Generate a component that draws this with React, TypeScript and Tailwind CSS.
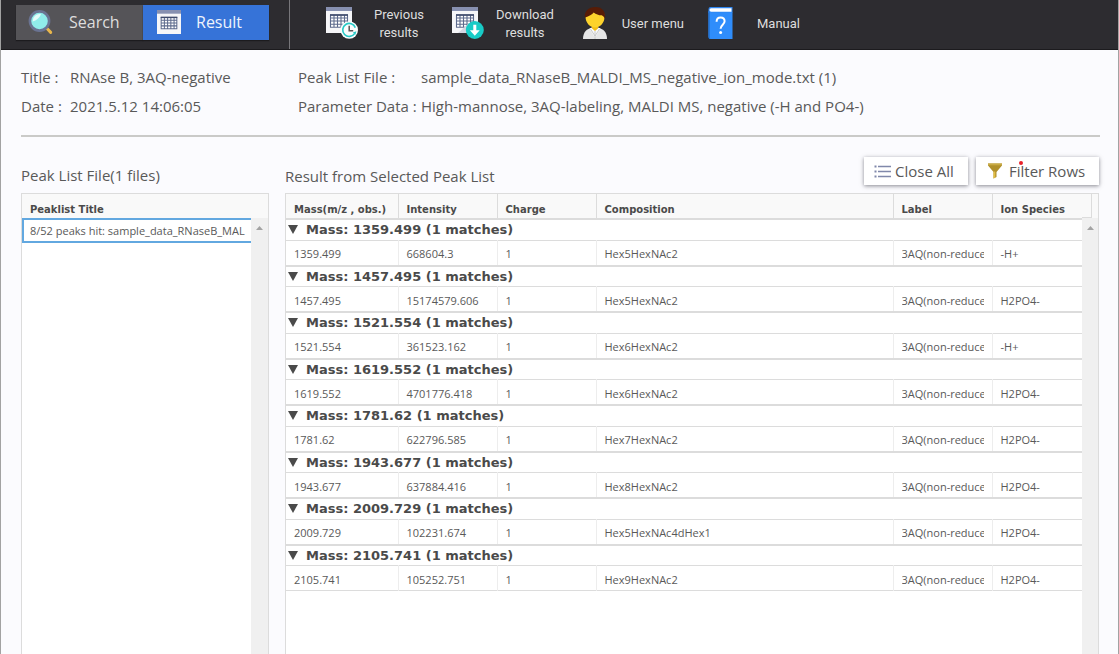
import React from 'react';

type Peak = {
  mass: string;
  intensity: string;
  charge: string;
  composition: string;
  ion: string;
};

const LABEL = '3AQ(non-reduced)';

const PEAKS: Peak[] = [
  { mass: '1359.499', intensity: '668604.3', charge: '1', composition: 'Hex5HexNAc2', ion: '-H+' },
  { mass: '1457.495', intensity: '15174579.606', charge: '1', composition: 'Hex5HexNAc2', ion: 'H2PO4-' },
  { mass: '1521.554', intensity: '361523.162', charge: '1', composition: 'Hex6HexNAc2', ion: '-H+' },
  { mass: '1619.552', intensity: '4701776.418', charge: '1', composition: 'Hex6HexNAc2', ion: 'H2PO4-' },
  { mass: '1781.62', intensity: '622796.585', charge: '1', composition: 'Hex7HexNAc2', ion: 'H2PO4-' },
  { mass: '1943.677', intensity: '637884.416', charge: '1', composition: 'Hex8HexNAc2', ion: 'H2PO4-' },
  { mass: '2009.729', intensity: '102231.674', charge: '1', composition: 'Hex5HexNAc4dHex1', ion: 'H2PO4-' },
  { mass: '2105.741', intensity: '105252.751', charge: '1', composition: 'Hex9HexNAc2', ion: 'H2PO4-' },
];

function MagnifierIcon() {
  return (
    <svg width="26" height="26" viewBox="0 0 26 26" aria-hidden="true">
      <path d="M17.5 18l2.5 2.5" stroke="#6c7a9c" strokeWidth="2" />
      <path d="M19.3 19.8l3.4 3.6" stroke="#e8b64c" strokeWidth="3" strokeLinecap="round" />
      <circle cx="11.5" cy="12" r="9.6" fill="#90ecea" stroke="#6a7392" strokeWidth="2.6" />
      <path d="M4.6 12.5A7 7 0 0 1 13 5.2C11.6 8.6 8.6 11.4 4.6 12.5z" fill="#e4fbfa" />
    </svg>
  );
}

function SheetShape() {
  return (
    <>
      <rect x="0" y="0" width="26" height="26" fill="#f6f6f8" />
      <rect x="0" y="0" width="26" height="4" fill="#8790b0" />
      <rect x="4" y="7.5" width="18" height="13" fill="#fff" />
      <path
        d="M4.5 8v12.5M8 8v12.5M11.5 8v12.5M15 8v12.5M18.5 8v12.5M21.5 8v12.5M4 8h18M4 11h18M4 14h18M4 17.2h18M4 20.3h18"
        stroke="#5d6a8c"
        strokeWidth="1.1"
      />
      <path d="M4 8h18" stroke="#3f4a6b" strokeWidth="1.6" />
    </>
  );
}

function SheetIcon() {
  return (
    <svg width="24" height="24" viewBox="0 0 26 26" aria-hidden="true">
      <SheetShape />
    </svg>
  );
}

function HistoryIcon() {
  return (
    <svg width="32" height="33" viewBox="0 0 32 33" aria-hidden="true">
      <SheetShape />
      <path d="M17 16v10h9z" fill="#d4d6e2" />
      <circle cx="23.2" cy="23" r="8.8" fill="#fbfdfd" />
      <path d="M29.3 20.6A6.5 6.5 0 1 0 28.6 26.6" fill="none" stroke="#25c9c6" strokeWidth="1.6" />
      <path d="M30.4 24.2l-3.6 1.2 2.6 2.4z" fill="#25c9c6" />
      <path d="M23.2 18.8v4.9h4" fill="none" stroke="#565656" strokeWidth="1.5" />
    </svg>
  );
}

function DownloadIcon() {
  return (
    <svg width="32" height="33" viewBox="0 0 32 33" aria-hidden="true">
      <SheetShape />
      <path d="M6 26l10-9v9z" fill="#d4d6e2" />
      <circle cx="22.8" cy="23" r="9" fill="#18cbc6" />
      <path d="M21.3 17.8h3v5.4h3.4l-4.9 5.5-4.9-5.5h3.4z" fill="#fff" />
    </svg>
  );
}

function UserIcon() {
  return (
    <svg width="26" height="33" viewBox="0 0 26 33" aria-hidden="true">
      <path d="M1 32c0-7 4-10.6 9-11h6c5 .4 9 4 9 11z" fill="#e6e6e6" />
      <path d="M7.6 21.4L13 31l5.4-9.6L13 19z" fill="#fafafa" />
      <path d="M13 24v8M8.5 22l4.5 7 4.5-7" fill="none" stroke="#c4c4c4" strokeWidth="0.9" />
      <path d="M10 17h6v4.5l-3 2.5-3-2.5z" fill="#f2bd16" />
      <path d="M3.5 9.500C3.500 4 8 2.500 13 2.500S22.600 4 22.600 9.500c0 6.500-4.600 11-9.600 11S3.500 16 3.500 9.500z" fill="#fdd32c" />
      <path d="M3 10.500C1.800 4.800 6.500 0 13.500 0S24 4.800 22.900 12c-.6-1.600-1.500-2.900-3.200-3.700-3 0-5.800-.9-8-2.800C10.200 7.600 7 9.300 3 10.500z" fill="#571c06" />
    </svg>
  );
}

function ManualIcon() {
  return (
    <svg width="25" height="33" viewBox="0 0 25 33" aria-hidden="true">
      <path d="M2.5 0H24.5v6H.5V2A2 2 0 0 1 2.5 0z" fill="#2f86f0" />
      <path d="M3.2 1.3H23.5v3.5H3.2a1.75 1.75 0 0 1 0-3.5z" fill="#fff" />
      <path d="M.5 3.5C1 5 2 5.4 3.5 5.4H24.5V32H2.5A2 2 0 0 1 .5 30z" fill="#2f8dfb" />
      <path d="M.5 4v26a2 2 0 0 0 1.5 2V5.3z" fill="#2477da" />
      <path d="M8.6 14.7c0-2.7 1.8-4.2 4-4.2s4 1.4 4 3.8c0 3.3-4 3.6-4 7.4" fill="none" stroke="#fff" strokeWidth="2" />
      <circle cx="12.6" cy="25.4" r="1.5" fill="#fff" />
    </svg>
  );
}

function ListIcon() {
  return (
    <svg width="17" height="13" viewBox="0 0 17 13" aria-hidden="true">
      <path d="M4 1.5h13M4 6.5h13M4 11.5h13" stroke="#8088aa" strokeWidth="1.7" />
      <path d="M0.5 1.5h2M0.5 6.5h2M0.5 11.5h2" stroke="#8088aa" strokeWidth="2" />
    </svg>
  );
}

function FunnelIcon() {
  return (
    <svg width="14" height="16" viewBox="0 0 14 16" aria-hidden="true">
      <path d="M0 .5h14v2L8.500 9v5L5.500 15.500V9L0 2.500z" fill="#b0902c" />
      <path d="M0 .5h14v1.800H0z" fill="#c9ab45" />
      <path d="M5.500 8.500h1.800v6L5.500 15.500z" fill="#e2bd45" />
    </svg>
  );
}

function ScrollTrack() {
  return (
    <div className="flex flex-1 justify-center bg-[#f0f0f0] pt-2">
      <svg width="7" height="4" viewBox="0 0 7 4" aria-hidden="true">
        <path d="M3.5 0L7 4H0z" fill="#a3a3a3" />
      </svg>
    </div>
  );
}

function Info({ label, value, labelClass }: { label: string; value: string; labelClass: string }) {
  return (
    <div className="flex whitespace-nowrap">
      <dt className={labelClass}>{label}</dt>
      <dd>{value}</dd>
    </div>
  );
}

const TH = "border-r border-[#dcdcdc] px-2 pt-2 text-left font-['DejaVu_Sans',sans-serif] text-[10px] leading-4 font-bold whitespace-nowrap text-[#4a4a4a]";
const TD = 'overflow-hidden px-2 pt-[3px] leading-5 whitespace-nowrap';

export default function App() {
  return (
    <div className="flex h-screen flex-col overflow-hidden border-x border-[#a2a2a2] bg-[#fbfbfe] font-['Open_Sans',sans-serif] text-[15px] leading-5 text-[#595959]">
      <header className="flex h-[50px] shrink-0 border-b border-[#1c1b1e] bg-[#2d2c30] text-[#dedede]">
        <nav className="flex w-[289px] shrink-0 items-start border-r border-[#77767a] pt-[5px] pl-[15px] text-base">
          <a href="#search" className="flex h-[35px] w-[127px] items-center gap-[15px] bg-[#555458] pb-0.5 pl-3 shadow-[0_1px_1px_#1c1b1e]">
            <MagnifierIcon />
            Search
          </a>
          <a href="#result" className="flex h-[35px] w-[126px] items-center gap-[15px] bg-[#3673d8] pb-0.5 pl-[14px] text-[#eef3fc] shadow-[0_1px_1px_#1c1b1e]">
            <SheetIcon />
            Result
          </a>
        </nav>
        <div className="flex h-[47px] items-center gap-6 pl-9 text-center font-['Roboto',sans-serif] text-[13px] leading-[18px]">
          <button type="button" className="flex w-[102px] items-center">
            <HistoryIcon />
            <span className="flex-1 pl-3">Previous results</span>
          </button>
          <button type="button" className="flex w-[106px] items-center">
            <DownloadIcon />
            <span className="flex-1 pl-2">Download results</span>
          </button>
          <button type="button" className="flex w-[102px] items-center justify-between">
            <UserIcon />
            User menu
          </button>
          <button type="button" className="flex w-[92px] items-center justify-between">
            <ManualIcon />
            Manual
          </button>
        </div>
      </header>

      <dl className="mr-[18px] ml-5 flex shrink-0 gap-2 border-b-2 border-[#cacac8] pt-[17px] pb-[19px]">
        <div className="flex w-[269px] flex-col gap-[9px]">
          <Info label="Title :" value="RNAse B, 3AQ-negative" labelClass="w-[49px]" />
          <Info label="Date :" value="2021.5.12 14:06:05" labelClass="w-[49px]" />
        </div>
        <div className="flex flex-col gap-[9px]">
          <Info label="Peak List File :" value="sample_data_RNaseB_MALDI_MS_negative_ion_mode.txt (1)" labelClass="w-[123px]" />
          <Info label="Parameter Data :" value="High-mannose, 3AQ-labeling, MALDI MS, negative (-H and PO4-)" labelClass="w-[123px]" />
        </div>
      </dl>

      <main className="flex min-h-0 flex-1 gap-4 pt-5 pr-[19px] pl-5">
        <section className="flex w-[248px] shrink-0 flex-col">
          <h2 className="flex h-9 items-center">Peak List File(1 files)</h2>
          <div className="flex flex-1 flex-col border-x border-t border-[#dcdcdc] bg-white">
            <div className="h-6 bg-[#f9f9f9] px-2 pt-2 font-['DejaVu_Sans',sans-serif] text-[10px] leading-4 font-bold text-[#4a4a4a]">
              Peaklist Title
            </div>
            <div className="flex flex-1">
              <ul className="min-w-0 flex-1 text-[11px]">
                <li className="flex h-[25px]">
                  <button type="button" className="flex-1 overflow-hidden border-y-2 border-l-2 border-[#62a8e0] pt-px pl-[6px] text-left whitespace-nowrap">
                    8/52 peaks hit: sample_data_RNaseB_MAL
                  </button>
                </li>
              </ul>
              <div className="flex w-[17px]">
                <ScrollTrack />
              </div>
            </div>
          </div>
        </section>

        <section className="flex min-w-0 flex-1 flex-col">
          <div className="flex h-9 items-center justify-between">
            <h2 className="pt-0.5">Result from Selected Peak List</h2>
            <div className="flex gap-2 pb-2 whitespace-nowrap">
              <button type="button" className="flex h-7 w-[104px] items-center gap-1 bg-white pl-[10px] shadow-[0_1px_4px_rgba(60,60,70,0.6)]">
                <ListIcon />
                Close All
              </button>
              <button type="button" className="relative flex h-7 w-[123px] items-center gap-[7px] bg-white pl-3 shadow-[0_1px_4px_rgba(60,60,70,0.6)]">
                <FunnelIcon />
                Filter Rows
                <span className="absolute top-1 left-[43px] size-1 rounded-full bg-[#e8222a]" />
              </button>
            </div>
          </div>
          <div className="flex flex-1 border-x border-t border-[#dcdcdc] bg-white">
            <div className="min-w-0 flex-1">
              <table className="h-[397px] w-full table-fixed border-collapse">
                <colgroup>
                  <col className="w-[112px]" />
                  <col className="w-[99px]" />
                  <col className="w-[99px]" />
                  <col />
                  <col className="w-[99px]" />
                  <col className="w-[90px]" />
                </colgroup>
                <thead>
                  <tr className="h-[25px] border-b-2 border-[#dcdcdc] bg-[#f9f9f9]">
                    <th scope="col" className={TH}>Mass(m/z , obs.)</th>
                    <th scope="col" className={TH}>Intensity</th>
                    <th scope="col" className={TH}>Charge</th>
                    <th scope="col" className={TH}>Composition</th>
                    <th scope="col" className={TH}>Label</th>
                    <th scope="col" className="pt-2 pl-2 text-left font-['DejaVu_Sans',sans-serif] text-[10px] leading-4 font-bold whitespace-nowrap text-[#4a4a4a]">
                      Ion Species
                    </th>
                  </tr>
                </thead>
                {PEAKS.map((p) => (
                  <tbody key={p.mass} className="border-b-2 border-[#dcdcdc] last:border-b">
                    <tr className="border-b border-[#dcdcdc]">
                      <th colSpan={6} scope="rowgroup" className="p-0 text-left font-['DejaVu_Sans',sans-serif] text-[13px] leading-[19px] font-bold text-[#4a4a4a]">
                        <button type="button" className="flex items-center gap-2 pl-[2px]">
                          <svg width="10" height="9" viewBox="0 0 10 9" aria-hidden="true">
                            <path d="M0 0h10L5 9z" fill="#4a4a4a" />
                          </svg>
                          Mass: {p.mass} (1 matches)
                        </button>
                      </th>
                    </tr>
                    <tr className="text-[11px]">
                      <td className={`${TD} border-r border-[#ededed]`}>{p.mass}</td>
                      <td className={`${TD} border-r border-[#ededed]`}>{p.intensity}</td>
                      <td className={`${TD} border-r border-[#ededed]`}>{p.charge}</td>
                      <td className={`${TD} border-r border-[#ededed]`}>{p.composition}</td>
                      <td className={`${TD} border-r border-[#ededed]`}>
                        <div className="overflow-hidden">{LABEL}</div>
                      </td>
                      <td className={TD}>{p.ion}</td>
                    </tr>
                  </tbody>
                ))}
              </table>
            </div>
            <div className="flex w-4 flex-col">
              <div className="h-6 bg-[#f9f9f9] pr-[6px]">
                <div className="h-full border-r border-b border-[#dcdcdc]" />
              </div>
              <ScrollTrack />
            </div>
          </div>
        </section>
      </main>
    </div>
  );
}
